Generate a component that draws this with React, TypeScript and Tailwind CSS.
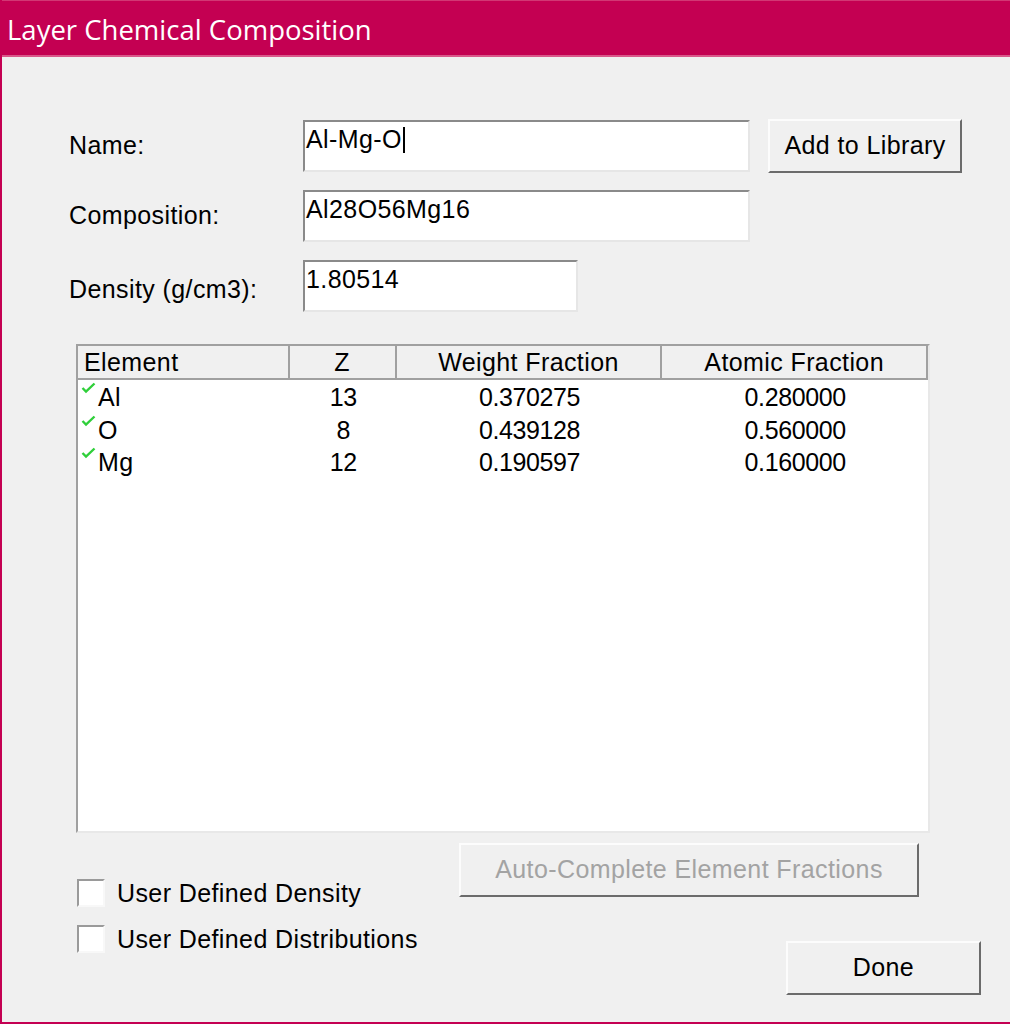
import React from 'react'

const body = { fontFamily: '"Liberation Sans", Arial, sans-serif' }

type Row = { el: string; z: string; wf: string; af: string }

const rows: Row[] = [
  { el: 'Al', z: '13', wf: '0.370275', af: '0.280000' },
  { el: 'O', z: '8', wf: '0.439128', af: '0.560000' },
  { el: 'Mg', z: '12', wf: '0.190597', af: '0.160000' },
]

// sunken edit box (Win classic style)
function Field({ w, value, caret }: { w: string; value: string; caret?: boolean }) {
  return (
    <div
      className={`${w} h-[52px] bg-white border-2 border-t-[#8a8a8a] border-l-[#8a8a8a] border-b-[#e6e6e6] border-r-[#e6e6e6] pl-[1px] pt-[3px] flex items-start`}
    >
      <span className="leading-[28px] text-black">{value}</span>
      {caret && <span className="ml-[1px] mt-[2px] h-[26px] w-[2px] bg-black" />}
    </div>
  )
}

function RaisedButton({
  w,
  children,
  disabled,
}: {
  w: string
  children: React.ReactNode
  disabled?: boolean
}) {
  return (
    <button
      className={`${w} h-[54px] bg-[#f0f0f0] border-2 border-t-[#fcfcfc] border-l-[#fcfcfc] border-b-[#6b6b6b] border-r-[#6b6b6b] flex items-center justify-center tracking-[0.4px] ${
        disabled ? 'text-[#a3a3a3]' : 'text-black'
      }`}
    >
      {children}
    </button>
  )
}

function Check() {
  return (
    <svg width="15" height="12" viewBox="0 0 15 12" className="mt-[2px] ml-[3px] shrink-0">
      <path d="M1.5 6 L5 9.5 L13.5 1.5" fill="none" stroke="#2fcf3a" strokeWidth="2.4" />
    </svg>
  )
}

function CheckBox({ label }: { label: string }) {
  return (
    <div className="flex items-center gap-[12px]">
      <span className="w-[28px] h-[28px] bg-white border-2 border-t-[#9a9a9a] border-l-[#9a9a9a] border-b-[#f8f8f8] border-r-[#f8f8f8]" />
      <span className="leading-[30px]">{label}</span>
    </div>
  )
}

export default function App() {
  return (
    <div
      className="w-[1010px] h-[1024px] bg-[#f0f0f0] border-l-2 border-b-2 border-[#c40052] flex flex-col text-[25px] text-black tracking-[0.4px]"
      style={body}
    >
      {/* Title bar */}
      <div
        className="h-[57px] shrink-0 bg-[#c40052] border-t border-[#d23774] border-b-2 border-b-[#d9588a] flex items-center pl-[5px] pt-[4px] text-white text-[27.5px] tracking-normal"
        style={{ fontFamily: '"Open Sans", "Noto Sans", sans-serif' }}
      >
        Layer Chemical Composition
      </div>

      <div className="flex flex-col pt-[62px] pl-[67px]">
        {/* Name */}
        <div className="flex items-center">
          <span className="w-[234px]">Name:</span>
          <Field w="w-[447px]" value="Al-Mg-O" caret />
          <div className="ml-[18px]">
            <RaisedButton w="w-[194px]">Add to Library</RaisedButton>
          </div>
        </div>
        {/* Composition */}
        <div className="flex items-center mt-[17px]">
          <span className="w-[234px]">Composition:</span>
          <Field w="w-[447px]" value="Al28O56Mg16" />
        </div>
        {/* Density */}
        <div className="flex items-center mt-[18px]">
          <span className="w-[234px] pt-[8px]">Density (g/cm3):</span>
          <Field w="w-[275px]" value="1.80514" />
        </div>
      </div>

      {/* Element table */}
      <div className="ml-[74px] mt-[32px] w-[854px] h-[489px] bg-white border-2 border-t-[#a0a0a0] border-l-[#a0a0a0] border-b-[#e8e8e8] border-r-[#e8e8e8] flex flex-col">
        <div className="flex h-[34px] shrink-0 bg-[#f0f0f0] border-b-2 border-[#a0a0a0]">
          <div className="w-[212px] border-r-2 border-[#a0a0a0] pl-[6px] leading-[32px]">Element</div>
          <div className="w-[107px] border-r-2 border-[#a0a0a0] text-center leading-[32px]">Z</div>
          <div className="w-[266px] border-r-2 border-[#a0a0a0] text-center leading-[32px]">Weight Fraction</div>
          <div className="w-[266px] border-r-2 border-[#a0a0a0] text-center leading-[32px]">Atomic Fraction</div>
        </div>
        {rows.map((r) => (
          <div key={r.el} className="flex h-[32.5px]">
            <div className="w-[212px] flex items-start">
              <Check />
              <span className="ml-[2px] leading-[34px]">{r.el}</span>
            </div>
            <div className="w-[107px] text-center leading-[34px] tracking-[-0.4px]">{r.z}</div>
            <div className="w-[266px] text-center leading-[34px] tracking-[-0.4px]">{r.wf}</div>
            <div className="w-[266px] text-center leading-[34px] tracking-[-0.4px]">{r.af}</div>
          </div>
        ))}
      </div>

      {/* Bottom controls */}
      <div className="flex ml-[75px]">
        <div className="w-[382px] flex flex-col pt-[45px] gap-[16px]">
          <CheckBox label="User Defined Density" />
          <CheckBox label="User Defined Distributions" />
        </div>
        <div className="w-[522px] flex flex-col items-start pt-[10px]">
          <RaisedButton w="w-[460px]" disabled>
            Auto-Complete Element Fractions
          </RaisedButton>
          <div className="self-end mt-[44px]">
            <RaisedButton w="w-[195px]">Done</RaisedButton>
          </div>
        </div>
      </div>
    </div>
  )
}
